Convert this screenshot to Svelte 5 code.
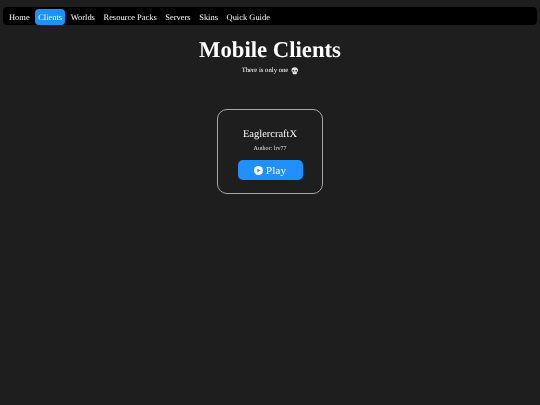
<script>
	const links = ["Home", "Clients", "Worlds", "Resource Packs", "Servers", "Skins", "Quick Guide"];
	let current = "Clients";
</script>

<div class="page">
	<nav>
		{#each links as link}
			<a href="#top" class:active={link === current}>{link}</a>
		{/each}
	</nav>

	<main>
		<h1>Mobile Clients</h1>
		<p class="sub">
			There is only one
			<svg class="skull" viewBox="0 0 16 16" aria-hidden="true">
				<path d="M8 .5C3.800.5 1 3.200 1 6.800c0 2.200 1 3.800 2.600 4.800V14c0 .8.6 1.500 1.400 1.500h6c.8 0 1.400-.7 1.400-1.500v-2.400C14 10.600 15 9 15 6.800 15 3.200 12.200.5 8 .5z" fill="#e6e6e6" />
				<circle cx="5" cy="8" r="2" fill="#444" />
				<circle cx="11" cy="8" r="2" fill="#444" />
				<path d="M8 10.500l-1 1.800h2z" fill="#555" />
			</svg>
		</p>

		<section class="card">
			<h2>EaglercraftX</h2>
			<p class="author">Author: lrv77</p>
			<button type="button">
				<svg viewBox="0 0 16 16" aria-hidden="true">
					<circle cx="8" cy="8" r="8" fill="#fff" />
					<path d="M6 4.600v6.800L11.500 8z" fill="#1e90ff" />
				</svg>
				Play
			</button>
		</section>
	</main>
</div>

<style>
	:global(body) {
		margin: 0;
		background: #1e1e1e;
		color: #fff;
		font-family: "Liberation Serif", "Times New Roman", serif;
		text-rendering: geometricPrecision;
	}

	/* own layer, so text gets grayscale antialiasing */
	.page {
		will-change: opacity;
		padding-top: 7px;
	}

	nav {
		display: flex;
		align-items: center;
		gap: 2.600px;
		margin: 0 3px;
		padding: 2px 3px 0;
		height: 16px;
		border-radius: 4px;
		background: #000;
		font-size: 8.450px;
	}

	a {
		padding: 2px 3px;
		border-radius: 4px;
		color: #fff;
		text-decoration: none;
		line-height: 12px;
	}

	a.active {
		background: #1e90ff;
	}

	main {
		display: flex;
		flex-direction: column;
		align-items: center;
	}

	h1 {
		margin: 11px 0 0;
		font-size: 22.700px;
		line-height: 27px;
		font-weight: bold;
	}

	.sub {
		display: flex;
		align-items: center;
		gap: 2.500px;
		margin: 3px 0 0;
		font-size: 6.700px;
		line-height: 10px;
	}

	.skull {
		width: 7.500px;
		height: 7.500px;
	}

	.card {
		display: flex;
		flex-direction: column;
		align-items: center;
		box-sizing: border-box;
		width: 106px;
		height: 85px;
		margin-top: 33px;
		padding-top: 18px;
		border: 1px solid #a6a6a6;
		border-radius: 10px;
	}

	h2 {
		margin: 0;
		font-size: 10.500px;
		line-height: 14px;
		font-weight: normal;
	}

	.author {
		margin: 3px 0 0;
		font-size: 6px;
		line-height: 8px;
		color: #e6e6e6;
	}

	button {
		display: flex;
		align-items: center;
		justify-content: center;
		gap: 3px;
		width: 65px;
		height: 20px;
		margin-top: 7px;
		padding: 0;
		border: none;
		border-radius: 5px;
		background: #1e90ff;
		color: #fff;
		font: 11.400px "Liberation Serif", serif;
	}

	button svg {
		width: 9px;
		height: 9px;
	}
</style>
